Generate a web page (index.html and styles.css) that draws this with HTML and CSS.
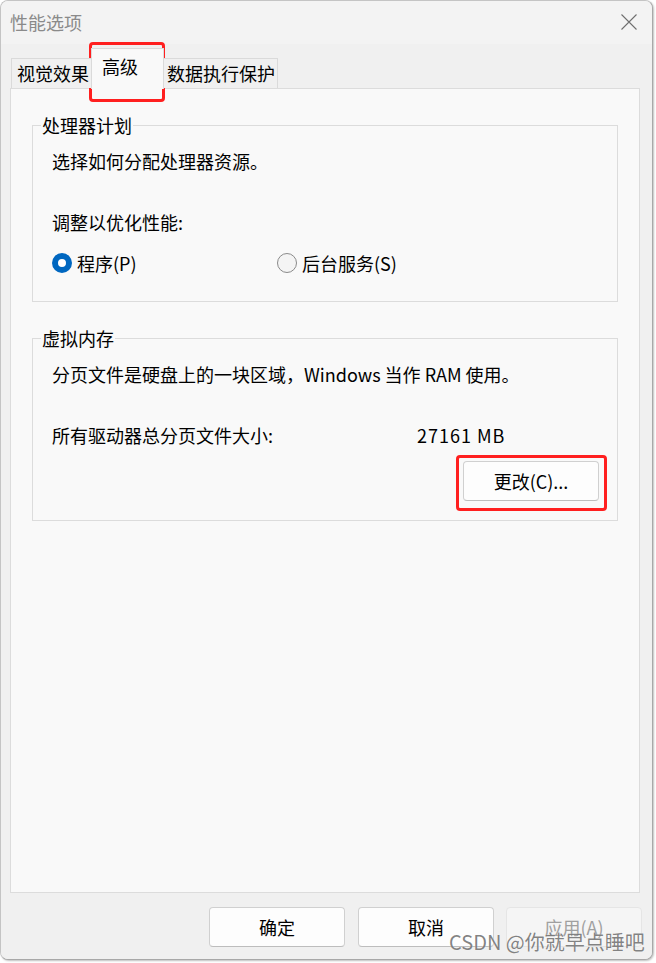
FILE: index.html
```html
<!DOCTYPE html>
<html lang="zh-CN">
<head>
<meta charset="utf-8">
<title>性能选项</title>
<link rel="stylesheet" href="styles.css">
</head>
<body>
<div class="screen">
  <div class="window">
    <div class="titlebar">
      <span class="title">性能选项</span>
      <svg class="close" width="16" height="16" viewBox="0 0 16 16"><path d="M0.5 0.5 L15.5 15.5 M15.5 0.5 L0.5 15.5" stroke="#6f6f6f" stroke-width="1.1" fill="none"/></svg>
    </div>
    <div class="main">
      <div class="tabs">
        <div class="tab tab-first">视觉效果</div>
        <div class="tab tab-active">高级</div>
        <div class="tab tab-last">数据执行保护</div>
      </div>
      <div class="panel">
        <fieldset class="group group-cpu">
          <legend>处理器计划</legend>
          <p class="line">选择如何分配处理器资源。</p>
          <p class="line gap">调整以优化性能:</p>
          <div class="radios">
            <label class="radio radio-first"><span class="dot on"></span>程序(P)</label>
            <label class="radio"><span class="dot"></span>后台服务(S)</label>
          </div>
        </fieldset>
        <fieldset class="group group-mem">
          <legend>虚拟内存</legend>
          <p class="line">分页文件是硬盘上的一块区域，Windows 当作 RAM 使用。</p>
          <div class="line gap size-row">
            <span class="size-label">所有驱动器总分页文件大小:</span>
            <span class="size-value">27161 MB</span>
          </div>
          <div class="btn-row">
            <button class="btn">更改(C)...</button>
          </div>
        </fieldset>
      </div>
      <div class="footer">
        <button class="btn">确定</button>
        <button class="btn">取消</button>
        <button class="btn disabled">应用(A)</button>
      </div>
    </div>
  </div>
  <div class="mark mark-tab"></div>
  <div class="mark mark-btn"></div>
  <div class="watermark">CSDN @你就早点睡吧</div>
</div>
</body>
</html>
```
FILE: styles.css
```css
* { box-sizing: border-box; }
html, body { margin: 0; padding: 0; background: #ffffff; }
body {
  font-family: "Noto Sans CJK SC", "Noto Sans", sans-serif;
  font-size: 18px;
  color: #000;
}
.screen { position: relative; width: 656px; height: 963px; overflow: hidden; }
.window {
  width: 653px;
  height: 960px;
  border: 1px solid #c4c4c4;
  border-right-color: #a8a8a8;
  border-bottom-color: #a8a8a8;
  border-radius: 8px;
  overflow: hidden;
  display: flex;
  flex-direction: column;
  box-shadow: 1px 1px 2px rgba(0,0,0,0.25);
  background: #f0f0f0;
}
.titlebar {
  height: 43px;
  flex: none;
  background: #f3f3f3;
  display: flex;
  align-items: center;
  justify-content: space-between;
  padding: 0 15px 2px 9px;
}
.title { color: #8a8a8a; font-size: 18px; line-height: 24px; }
.close { display: block; margin-top: 1px; }
.main {
  flex: 1;
  display: flex;
  flex-direction: column;
  padding: 0 12px 0 9px;
  background: #f0f0f0;
}
.tabs {
  height: 44px;
  display: flex;
  align-items: flex-end;
  padding-left: 1px;
  position: relative;
  z-index: 1;
}
.tab {
  height: 30px;
  line-height: 28px;
  border: 1px solid #dadada;
  border-bottom: none;
  background: #f0f0f0;
  white-space: nowrap;
}
.tab-first { width: 80px; padding-left: 5px; border-right: none; }
.tab-active {
  width: 73px;
  height: 41px;
  margin-bottom: -1px;
  background: #f9f9f9;
  padding-left: 10px;
  line-height: 35px;
}
.tab-last { width: 114px; padding-left: 3px; border-left: none; }
.panel {
  height: 805px;
  flex: none;
  background: #f9f9f9;
  border: 1px solid #dcdcdc;
  padding: 24px 21px 0 21px;
}
.group {
  margin: 0;
  border: 1px solid #dcdcdc;
  padding: 12px 18px 0 19px;
  min-width: 0;
}
.group legend {
  padding: 0 1px;
  margin-left: -11px;
  line-height: 24px;
  font-size: 18px;
}
.group-cpu { padding-bottom: 26px; }
.group-mem { margin-top: 24px; padding-bottom: 19px; }
.line { margin: 0; line-height: 24px; white-space: nowrap; }
.gap { margin-top: 37px; }
.radios { display: flex; margin-top: 17px; line-height: 24px; }
.radio { display: flex; align-items: center; gap: 5px; white-space: nowrap; }
.radio-first { width: 225px; flex: none; }
.dot {
  width: 20px;
  height: 20px;
  border-radius: 50%;
  border: 1px solid #8a8a8a;
  background: #f4f4f4;
  flex: none;
}
.dot.on {
  border: 6.5px solid #0067c0;
  background: #ffffff;
}
.size-row { display: flex; }
.size-label { width: 365px; flex: none; }
.size-value { letter-spacing: 1px; }
.btn-row { display: flex; justify-content: flex-end; margin-top: 14px; }
.btn {
  width: 136px;
  height: 40px;
  font-family: inherit;
  font-size: 18px;
  color: #000;
  background: #fdfdfd;
  border: 1px solid #d0d0d0;
  border-bottom-color: #bdbdbd;
  border-radius: 4px;
  padding: 0;
  line-height: 24px;
}
.footer {
  display: flex;
  justify-content: flex-end;
  gap: 13px;
  padding-top: 14px;
  margin-right: -2px;
}
.footer .btn:last-child { margin-left: -1px; }
.btn.disabled {
  color: #a0a0a0;
  background: #f5f5f5;
  border-color: #e5e5e5;
}
.mark {
  position: absolute;
  border: 3px solid #ff1f1f;
  border-radius: 4px;
}
.mark-tab { left: 89px; top: 42px; width: 76px; height: 60px; }
.mark-btn { left: 456px; top: 455px; width: 151px; height: 56px; }
.watermark {
  position: absolute;
  left: 449px;
  top: 929px;
  font-size: 20px;
  line-height: 26px;
  color: rgba(90, 90, 90, 0.75);
  white-space: nowrap;
  text-shadow: 0 0 1px rgba(255,255,255,0.8);
}
```
